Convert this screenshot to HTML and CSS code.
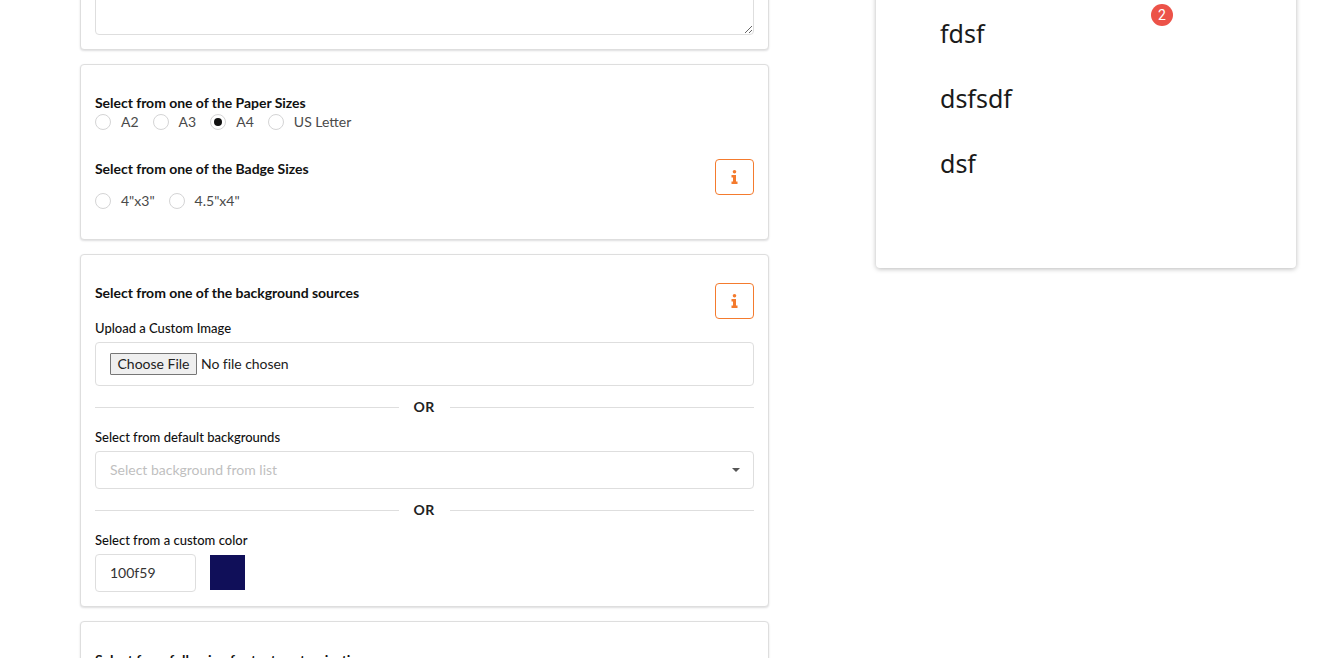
FILE: index.html
```html
<!DOCTYPE html>
<html lang="en">
<head>
  <meta charset="UTF-8" />
  <meta name="viewport" content="width=device-width, initial-scale=1" />
  <title>Badge Settings</title>
  <link rel="stylesheet" href="styles.css">
</head>
<body>
  <div class="layout">
    <div class="form-col">

      <div class="segment segment-top">
        <textarea class="notes"></textarea>
      </div>

      <div class="segment segment-sizes">
        <div class="field-title">Select from one of the Paper Sizes</div>
        <div class="radios">
          <label class="radio"><span class="dot"></span>A2</label>
          <label class="radio"><span class="dot"></span>A3</label>
          <label class="radio"><span class="dot checked"></span>A4</label>
          <label class="radio"><span class="dot"></span>US Letter</label>
        </div>
        <div class="split split-badge">
          <div>
            <div class="field-title">Select from one of the Badge Sizes</div>
            <div class="radios radios-badge">
              <label class="radio"><span class="dot"></span>4"x3"</label>
              <label class="radio"><span class="dot"></span>4.5"x4"</label>
            </div>
          </div>
          <button class="info-btn" type="button">
            <svg width="7" height="14" viewBox="0 0 7 14"><circle cx="3.500" cy="1.800" r="1.800" fill="#f47b2e"/><path d="M.5 5h4.500v6.500h1.500V14H.5v-2.500h1.500V7.500H.5z" fill="#f47b2e"/></svg>
          </button>
        </div>
      </div>

      <div class="segment segment-bg">
        <div class="split split-bg">
          <div class="field-title">Select from one of the background sources</div>
          <button class="info-btn" type="button">
            <svg width="7" height="14" viewBox="0 0 7 14"><circle cx="3.500" cy="1.800" r="1.800" fill="#f47b2e"/><path d="M.5 5h4.500v6.500h1.500V14H.5v-2.500h1.500V7.500H.5z" fill="#f47b2e"/></svg>
          </button>
        </div>
        <div class="small-label">Upload a Custom Image</div>
        <div class="file-box"><input type="file" class="file-input" /></div>
        <div class="or-line"><span>OR</span></div>
        <div class="small-label">Select from default backgrounds</div>
        <div class="select-box">
          <span>Select background from list</span>
          <span class="caret"></span>
        </div>
        <div class="or-line"><span>OR</span></div>
        <div class="small-label">Select from a custom color</div>
        <div class="color-row">
          <div class="color-input">100f59</div>
          <div class="swatch"></div>
        </div>
      </div>

      <div class="segment segment-last">
        <div class="field-title">Select from following for text customization</div>
      </div>

    </div>

    <div class="preview-col">
      <div class="preview-card">
        <span class="count-badge">2</span>
        <ul class="name-list">
          <li>fdsf</li>
          <li>dsfsdf</li>
          <li>dsf</li>
        </ul>
      </div>
    </div>
  </div>
</body>
</html>
```

FILE: styles.css
```css
html, body {
  margin: 0;
  padding: 0;
  height: 658px;
  overflow: hidden;
  background: #fff;
}
body {
  font-family: "Lato", "Liberation Sans", sans-serif;
  font-size: 14px;
  color: #111;
}
.layout {
  display: flex;
  align-items: flex-start;
  padding-left: 80px;
}
.form-col {
  width: 689px;
  display: flex;
  flex-direction: column;
  gap: 14px;
  flex-shrink: 0;
}
.preview-col {
  width: 420px;
  margin-left: 107px;
  flex-shrink: 0;
}
.segment {
  box-sizing: border-box;
  padding: 14px;
  background: #fff;
  border: 1px solid #dedede;
  border-radius: 4px;
  box-shadow: 0 1px 2px rgba(34, 36, 38, 0.15);
}
.segment-top {
  margin-top: -30px;
  height: 80px;
}
.notes {
  display: block;
  box-sizing: border-box;
  width: 100%;
  height: 50px;
  border: 1px solid #dedede;
  border-radius: 4px;
  outline: none;
  margin: 0;
}
.segment-sizes {
  height: 176px;
  padding-top: 29px;
}
.field-title {
  font-weight: 700;
  font-size: 14px;
  line-height: 18px;
  letter-spacing: -0.04px;
  color: #111;
}
.radios {
  display: flex;
  gap: 14px;
  margin-top: 1px;
}
.radio {
  display: flex;
  align-items: center;
  line-height: 18px;
  color: #4a4a4a;
  font-size: 14px;
}
.dot {
  box-sizing: border-box;
  width: 16px;
  height: 16px;
  margin-right: 10px;
  border: 1px solid #d4d4d5;
  border-radius: 50%;
  background: #fff;
  display: flex;
  align-items: center;
  justify-content: center;
}
.dot.checked::after {
  content: "";
  width: 8px;
  height: 8px;
  border-radius: 50%;
  background: #111;
}
.split {
  display: flex;
  justify-content: space-between;
}
.split-badge {
  margin-top: 29px;
}
.split-badge .info-btn {
  margin-top: -1px;
}
.radios-badge {
  margin-top: 14px;
}
.info-btn {
  box-sizing: border-box;
  width: 39px;
  height: 36px;
  padding: 0;
  display: flex;
  align-items: center;
  justify-content: center;
  background: #fff;
  border: 1px solid #f47b2e;
  border-radius: 4px;
}
.segment-bg {
  height: 353px;
  padding-top: 28px;
}
.split-bg .field-title {
  margin-top: 1px;
}
.small-label {
  font-size: 13px;
  font-weight: 500;
  line-height: 18px;
  color: #111;
}
.file-box {
  box-sizing: border-box;
  height: 44px;
  margin-top: 5px;
  padding: 0 14px;
  display: flex;
  align-items: center;
  border: 1px solid #dedede;
  border-radius: 4px;
}
.file-input {
  font-family: inherit;
  font-size: 14px;
  color: #222;
  letter-spacing: -0.05px;
}
.file-input::file-selector-button {
  box-sizing: border-box;
  width: 87px;
  height: 22px;
  margin-right: 4px;
  padding: 0 0 1px;
  font-family: inherit;
  font-size: 14px;
  color: #222;
  background: #efefef;
  border: 1px solid #767676;
  border-radius: 1px;
}
.or-line {
  display: flex;
  align-items: center;
  gap: 14px;
  height: 18px;
  margin: 12px 0 12px;
  font-weight: 700;
  font-size: 14px;
  letter-spacing: 0.4px;
  color: #222;
}
.or-line span {
  padding-bottom: 2px;
  margin-right: 1px;
}
.or-line::before,
.or-line::after {
  content: "";
  flex: 1;
  height: 1px;
  background: #dedede;
}
.select-box {
  box-sizing: border-box;
  height: 38px;
  margin-top: 5px;
  padding: 0 13px 2px 14px;
  display: flex;
  align-items: center;
  justify-content: space-between;
  border: 1px solid #dedede;
  border-radius: 4px;
  color: #bfbfbf;
}
.caret {
  width: 0;
  height: 0;
  border-left: 4px solid transparent;
  border-right: 4px solid transparent;
  border-top: 4px solid #555;
  margin-top: 2px;
}
.color-row {
  display: flex;
  align-items: flex-start;
  gap: 14px;
  margin-top: 5px;
}
.color-input {
  box-sizing: border-box;
  width: 101px;
  height: 38px;
  padding: 0 14px 2px;
  display: flex;
  align-items: center;
  border: 1px solid #dedede;
  border-radius: 4px;
  color: #333;
}
.swatch {
  width: 35px;
  height: 35px;
  margin-top: 1px;
  background: #100f59;
}
.segment-last {
  height: 80px;
  padding-top: 29px;
}
.preview-card {
  position: relative;
  box-sizing: border-box;
  height: 288px;
  margin-top: -20px;
  padding: 21px 0 0 64px;
  background: #fff;
  border-radius: 4px;
  box-shadow: 0 1px 5px rgba(0, 0, 0, 0.28);
}
.count-badge {
  position: absolute;
  left: 275px;
  top: 24px;
  width: 22px;
  height: 22px;
  border-radius: 50%;
  background: #ec5248;
  color: #fff;
  font-family: "Roboto", sans-serif;
  font-size: 14px;
  line-height: 22px;
  text-align: center;
}
.name-list {
  list-style: none;
  margin: 0;
  padding: 0;
}
.name-list li {
  font-family: "Noto Sans", sans-serif;
  font-size: 25px;
  line-height: 65px;
  color: #1a1a1a;
}
```
